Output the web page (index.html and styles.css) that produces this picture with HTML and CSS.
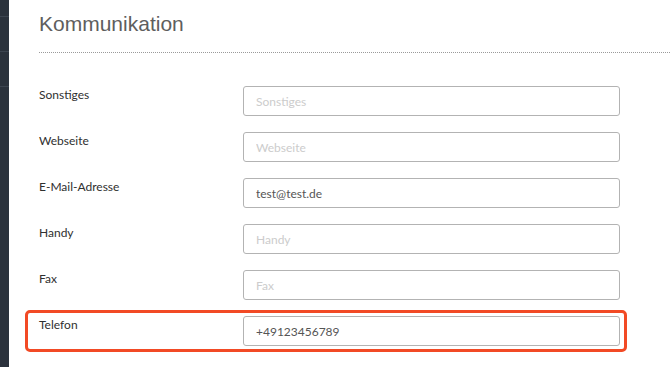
FILE: index.html
```html
<!DOCTYPE html>
<html lang="de">
<head>
  <meta charset="UTF-8">
  <meta name="viewport" content="width=device-width, initial-scale=1.0">
  <title>Kommunikation</title>
  <link rel="stylesheet" href="styles.css">
</head>
<body>
  <div class="layout">
    <aside class="sidebar">
      <div class="sidebar-item"></div>
      <div class="sidebar-item"></div>
      <div class="sidebar-item"></div>
    </aside>

    <main class="content">
      <h2 class="section-title">Kommunikation</h2>

      <form class="form">
        <div class="form-row">
          <label for="misc">Sonstiges</label>
          <input type="text" id="misc" class="input-field" placeholder="Sonstiges">
        </div>
        <div class="form-row">
          <label for="web">Webseite</label>
          <input type="text" id="web" class="input-field" placeholder="Webseite">
        </div>
        <div class="form-row">
          <label for="mail">E-Mail-Adresse</label>
          <input type="text" id="mail" class="input-field" placeholder="E-Mail-Adresse" value="test@test.de">
        </div>
        <div class="form-row">
          <label for="mobile">Handy</label>
          <input type="text" id="mobile" class="input-field" placeholder="Handy">
        </div>
        <div class="form-row">
          <label for="fax">Fax</label>
          <input type="text" id="fax" class="input-field" placeholder="Fax">
        </div>
        <div class="form-row highlight">
          <label for="phone">Telefon</label>
          <input type="text" id="phone" class="input-field" placeholder="Telefon" value="+49123456789">
        </div>
      </form>
    </main>
  </div>
</body>
</html>
```

FILE: styles.css
```css
* {
  margin: 0;
  padding: 0;
  box-sizing: border-box;
}

:root {
  --sidebar-bg: #2b323c;
  --sidebar-line: #3d4550;
  --text-label: #2f2f2f;
  --text-title: #5e5e5e;
  --border-input: #b3b3b3;
  --accent-red: #f24a25;
}

body {
  font-family: 'Lato', 'Liberation Sans', sans-serif;
  background-color: #ffffff;
  color: var(--text-label);
  overflow: hidden;
}

.layout {
  display: flex;
  min-height: 100vh;
}

/* Dark side navigation strip */
.sidebar {
  width: 9px;
  flex-shrink: 0;
  background-color: var(--sidebar-bg);
  padding-top: 16px;
}

.sidebar-item {
  height: 35px;
  border-top: 1px solid var(--sidebar-line);
}

.sidebar-item:last-child {
  height: 1px;
}

.content {
  flex: 1;
  padding-left: 30px;
}

.section-title {
  font-family: 'Liberation Sans', Arial, sans-serif;
  font-size: 21px;
  font-weight: 300;
  color: var(--text-title);
  padding-top: 12px;
  height: 53px;
  border-bottom: 1px dotted #9a9a9a;
}

.form {
  width: 581px;
  display: flex;
  flex-direction: column;
  gap: 16px;
  padding-top: 33px;
}

.form-row {
  display: grid;
  grid-template-columns: 204px 377px;
  align-items: start;
}

.form-row label {
  font-size: 12px;
  line-height: 18px;
  color: var(--text-label);
}

.input-field {
  height: 30px;
  padding: 0 12px;
  border: 1px solid var(--border-input);
  border-radius: 3px;
  font-family: 'Lato', sans-serif;
  font-size: 12px;
  color: #555555;
  background-color: #ffffff;
  outline: none;
}

.input-field::placeholder {
  color: #cccccc;
}

/* Row that is marked with the red frame */
.form-row.highlight {
  margin: -6px -7px 0 -14px;
  padding: 3px 4px 3px 11px;
  border: 3px solid var(--accent-red);
  border-radius: 5px;
}
```
